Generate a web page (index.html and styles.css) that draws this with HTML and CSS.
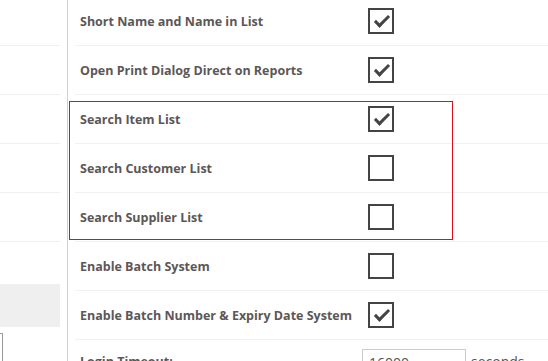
FILE: index.html
```html
<!DOCTYPE html>
<html lang="en">
<head>
    <meta charset="UTF-8">
    <meta name="viewport" content="width=device-width, initial-scale=1.0">
    <title>Settings</title>
    <link rel="stylesheet" href="styles.css">
</head>
<body>
    <div class="layout">
        <!-- Side menu (scrolled) -->
        <div class="sidebar">
            <div class="side-item"></div>
            <div class="side-item"></div>
            <div class="side-item"></div>
            <div class="side-item"></div>
            <div class="side-item"></div>
            <div class="side-gap"></div>
            <div class="side-active"></div>
            <div class="side-input"></div>
        </div>

        <div class="divider"></div>

        <!-- Settings list -->
        <div class="settings">
            <div class="row">
                <span class="label">Short Name and Name in List</span>
                <span class="check checked"></span>
            </div>
            <div class="row">
                <span class="label">Open Print Dialog Direct on Reports</span>
                <span class="check checked"></span>
            </div>
            <div class="row">
                <span class="label">Search Item List</span>
                <span class="check checked"></span>
            </div>
            <div class="row">
                <span class="label">Search Customer List</span>
                <span class="check"></span>
            </div>
            <div class="row">
                <span class="label">Search Supplier List</span>
                <span class="check"></span>
            </div>
            <div class="row">
                <span class="label">Enable Batch System</span>
                <span class="check"></span>
            </div>
            <div class="row">
                <span class="label">Enable Batch Number &amp; Expiry Date System</span>
                <span class="check checked"></span>
            </div>
            <div class="row row-input">
                <span class="label">Login Timeout:</span>
                <span class="input-box">16000</span>
                <span class="unit">seconds</span>
            </div>

            <!-- highlight around the search options -->
            <div class="highlight"></div>
        </div>
    </div>
</body>
</html>
```

FILE: styles.css
```css
body {
    margin: 0;
    background: #fff;
    font-family: "Open Sans", Arial, sans-serif;
    overflow: hidden;
}

.layout {
    display: flex;
    height: 361px;
}

/* Left menu */
.sidebar {
    width: 60px;
    margin-top: -3px;
    display: flex;
    flex-direction: column;
}

.side-item {
    height: 48px;
    border-bottom: 1px solid #f0f0f0;
    flex-shrink: 0;
}

.side-gap {
    height: 42px;
    flex-shrink: 0;
}

.side-active {
    height: 43px;
    background: #efefef;
    flex-shrink: 0;
}

.side-input {
    margin-top: 6px;
    width: 2px;
    height: 40px;
    border: 1px solid #999;
    border-left: none;
    flex-shrink: 0;
}

.divider {
    width: 1px;
    margin-left: 7px;
    background: #cfcfcf;
}

/* Settings rows */
.settings {
    position: relative;
    flex: 1;
    margin-top: -3px;
    padding-left: 7px;
}

.row {
    display: flex;
    align-items: center;
    height: 48px;
    padding-left: 5px;
    border-bottom: 1px solid #f1f1f1;
}

.label {
    width: 288px;
    flex-shrink: 0;
    font-size: 12.5px;
    font-weight: 700;
    color: #5c5757;
}

.check {
    box-sizing: border-box;
    width: 26px;
    height: 26px;
    border: 2px solid #444;
    position: relative;
}

.checked::after {
    content: "";
    position: absolute;
    left: 8px;
    top: 2px;
    width: 5px;
    height: 12px;
    border-right: 3px solid #444;
    border-bottom: 3px solid #444;
    transform: rotate(45deg);
}

.row-input {
    align-items: flex-start;
    padding-top: 9px;
    border-bottom: none;
}

.row-input .label {
    width: 282px;
    padding-top: 4px;
}

.input-box {
    box-sizing: border-box;
    width: 104px;
    height: 32px;
    border: 1px solid #ccc;
    padding: 3px 0 0 6px;
    font-size: 14px;
    color: #555;
}

.unit {
    padding: 3px 0 0 5px;
    font-size: 14px;
    color: #555;
}

.highlight {
    position: absolute;
    left: 1px;
    top: 104px;
    width: 382px;
    height: 137px;
    border: 1px solid #e0101a;
    pointer-events: none;
}
```
